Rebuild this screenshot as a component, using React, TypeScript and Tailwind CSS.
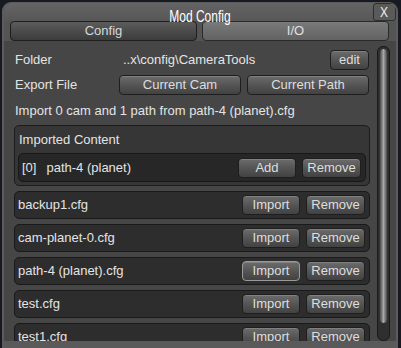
import React from 'react';

const btn =
  'flex items-center justify-center h-[20px] rounded-[4px] border border-[#1e1e1e] bg-linear-to-b from-[#6c6c6c] via-[#555555] to-[#424242] text-[13px] text-[#dedede] shadow-[inset_0_1px_0_rgba(255,255,255,0.15)]';

const files = [
  { name: 'backup1.cfg' },
  { name: 'cam-planet-0.cfg' },
  { name: 'path-4 (planet).cfg', hover: true },
  { name: 'test.cfg' },
  { name: 'test1.cfg' },
];

function FileRow({ name, hover }: { name: string; hover?: boolean }) {
  return (
    <div className="flex items-center h-[28px] shrink-0 rounded-[5px] border border-[#1a1a1a] bg-[#2d2d2d] pl-[3px] pr-[4px]">
      <span className="text-[13px] text-[#e4e4e4]">{name}</span>
      <div className="ml-auto flex gap-[6px]">
        <div className={`${btn} w-[58px] ${hover ? 'border-[#9a9a9a]' : ''}`}>Import</div>
        <div className={`${btn} w-[59px]`}>Remove</div>
      </div>
    </div>
  );
}

export default function App() {
  return (
    <div
      className="w-[401px] h-[348px] overflow-hidden bg-[#181a22] pt-[2px] pl-[2px]"
      style={{ fontFamily: '"Liberation Sans", Arial, sans-serif' }}
    >
      <div className="relative w-[396px] h-[348px] rounded-t-[9px] border-x-2 border-t border-[#5c5c5c] bg-[#464646] flex flex-col overflow-hidden">
        {/* title */}
        <div className="h-[18px] shrink-0 bg-linear-to-b from-[#646464] to-[#575757] flex items-end justify-center">
          <span
            className="text-[16px] leading-[16px] text-white translate-y-[4px] scale-x-[0.75] origin-center"
            style={{ fontFamily: '"Liberation Sans", sans-serif' }}
          >
            Mod Config
          </span>
        </div>
        <div className="absolute right-0 top-0 w-[23px] h-[18px] rounded-[3px] border border-[#2e2e2e] bg-[#5a5a5a] flex items-center justify-center text-[15px] text-[#eeeeee]">
          <span className="scale-x-[0.8]">X</span>
        </div>

        {/* tabs */}
        <div className="flex gap-[5px] pl-[6px] pr-[7px] h-[20px] shrink-0 bg-[#545454]">
          <div className="flex-1 flex items-center justify-center rounded-[4px] border border-[#1e1e1e] bg-linear-to-b from-[#5c5c5c] to-[#3c3c3c] text-[13px] text-[#d8d8d8]">
            Config
          </div>
          <div className="flex-1 flex items-center justify-center rounded-[4px] border border-[#2a2a2a] bg-linear-to-b from-[#7a7a7a] to-[#626262] text-[13px] text-[#e0e0e0]">
            I/O
          </div>
        </div>

        {/* body */}
        <div className="flex h-[295px] mt-[5px] shrink-0 pl-[10px]">
          <div className="w-[356px] flex flex-col overflow-hidden text-[13px] text-[#e4e4e4]">
            <div className="flex items-center h-[20px] mt-[4px] shrink-0 pr-[1px]">
              <span className="w-[105px] pl-[1px]">Folder</span>
              <span className="pl-[4px]">..x\config\CameraTools</span>
              <div className={`${btn} w-[39px] ml-auto`}>edit</div>
            </div>
            <div className="flex items-center h-[20px] mt-[5px] shrink-0 pr-[1px]">
              <span className="w-[105px] pl-[1px]">Export File</span>
              <div className="flex gap-[6px]">
                <div className={`${btn} w-[122px]`}>Current Cam</div>
                <div className={`${btn} w-[122px]`}>Current Path</div>
              </div>
            </div>
            <div className="mt-[8px] h-[16px] leading-[16px] pl-[1px] shrink-0">
              Import 0 cam and 1 path from path-4 (planet).cfg
            </div>

            <div className="mt-[6px] h-[61px] shrink-0 rounded-[5px] border border-[#1c1c1c] bg-[#363636] px-[3px] flex flex-col">
              <div className="h-[27px] leading-[27px] pl-[1px]">Imported Content</div>
              <div className="h-[29px] flex items-center rounded-[5px] border border-[#181818] bg-[#272727] pl-[3px] pr-[4px]">
                <span>[0]</span>
                <span className="ml-[10px]">path-4 (planet)</span>
                <div className="ml-auto flex gap-[6px]">
                  <div className={`${btn} w-[58px]`}>Add</div>
                  <div className={`${btn} w-[59px]`}>Remove</div>
                </div>
              </div>
            </div>

            <div className="mt-[5px] flex flex-col gap-[5px]">
              {files.map((f) => (
                <FileRow key={f.name} name={f.name} hover={f.hover} />
              ))}
            </div>
          </div>

          {/* scrollbar */}
          <div className="ml-[7px] w-[13px] h-[295px] rounded-[6px] border border-[#1a1a1a] bg-[#2f2f2f] p-[1px] flex flex-col">
            <div className="h-[276px] rounded-[5px] bg-linear-to-r from-[#4a4a4a] via-[#a8a8a8] to-[#4a4a4a] border border-[#333]" />
          </div>
        </div>

        <div className="flex-1 bg-[#5a5a5a]" />
      </div>
    </div>
  );
}
